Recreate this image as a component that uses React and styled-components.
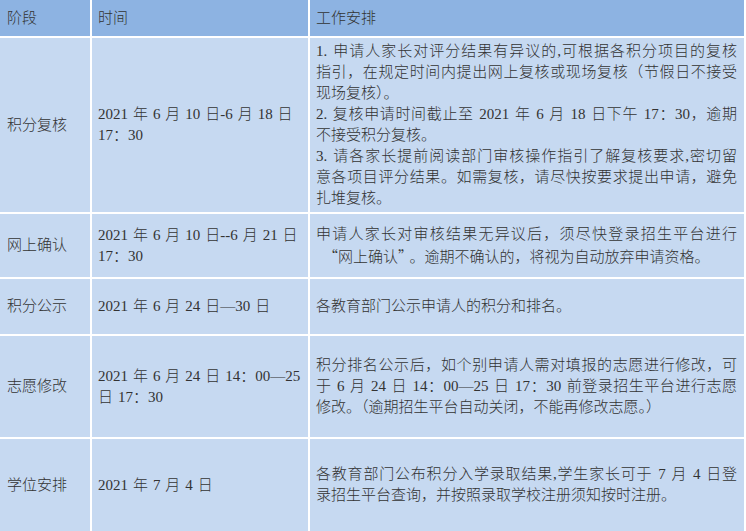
import React from "react";
import styled, { createGlobalStyle } from "styled-components";

const GlobalStyle = createGlobalStyle`
  html, body { margin: 0; padding: 0; background: #ffffff; }
  body {
    font-family: "Liberation Serif", "Noto Sans CJK SC", serif;
    color: #333333;
  }
`;

const Table = styled.div`
  display: grid;
  width: 744px;
  grid-template-columns: 90px 216px 434px;
  grid-template-rows: 36px 174px 63px 55px 101px 92px;
  gap: 2px;
  background: #ffffff;
  font-size: 15px;
  line-height: 21px;
  word-spacing: 1.2px;
  font-weight: 300;
`;

const HeadCell = styled.div`
  background: #8db3e2;
  display: flex;
  align-items: center;
  padding: 0 7px 0 ${(p) => p.$left || 7}px;
  color: #333333;
`;

const Cell = styled.div`
  background: #c6d9f1;
  display: flex;
  align-items: center;
  padding: 0 7px 0 ${(p) => p.$left || 7}px;
  min-width: 0;
`;

const Lines = styled.div`
  width: 100%;
`;

const Line = styled.span`
  display: block;
  text-align: ${(p) => (p.$justify ? "justify" : "left")};
  text-align-last: ${(p) => (p.$justify ? "justify" : "left")};
`;

const TimeLine = styled.span`
  display: block;
  white-space: nowrap;
`;

const Quote = styled.span`
  font-family: "Noto Sans CJK SC", sans-serif;
  margin-left: ${(p) => (p.$open ? "7px" : "0")};
  margin-right: ${(p) => (p.$open ? "0" : "4px")};
`;

const rows = [
  {
    stage: "积分复核",
    time: ["2021 年 6 月 10 日-6 月 18 日", "17：30"],
    work: [
      ["1. 申请人家长对评分结果有异议的,可根据各积分项目的复核", true],
      ["指引，在规定时间内提出网上复核或现场复核（节假日不接受", true],
      ["现场复核）。", false],
      ["2. 复核申请时间截止至 2021 年 6 月 18 日下午 17：30，逾期", true],
      ["不接受积分复核。", false],
      ["3. 请各家长提前阅读部门审核操作指引了解复核要求,密切留", true],
      ["意各项目评分结果。如需复核，请尽快按要求提出申请，避免", true],
      ["扎堆复核。", false],
    ],
  },
  {
    stage: "网上确认",
    time: ["2021 年 6 月 10 日--6 月 21 日", "17：30"],
    work: [
      ["申请人家长对审核结果无异议后，须尽快登录招生平台进行", true],
      [
        <>
          <Quote $open>“</Quote>网上确认<Quote>”</Quote>。逾期不确认的，将视为自动放弃申请资格。
        </>,
        false,
      ],
    ],
  },
  {
    stage: "积分公示",
    time: ["2021 年 6 月 24 日—30 日"],
    work: [["各教育部门公示申请人的积分和排名。", false]],
  },
  {
    stage: "志愿修改",
    time: ["2021 年 6 月 24 日 14：00—25", "日 17：30"],
    work: [
      ["积分排名公示后，如个别申请人需对填报的志愿进行修改，可", true],
      ["于 6 月 24 日 14：00—25 日 17：30 前登录招生平台进行志愿", true],
      ["修改。（逾期招生平台自动关闭，不能再修改志愿。）", false],
    ],
  },
  {
    stage: "学位安排",
    time: ["2021 年 7 月 4 日"],
    work: [
      ["各教育部门公布积分入学录取结果,学生家长可于 7 月 4 日登", true],
      ["录招生平台查询，并按照录取学校注册须知按时注册。", false],
    ],
  },
];

export default function App() {
  return (
    <>
      <GlobalStyle />
      <Table>
        <HeadCell>阶段</HeadCell>
        <HeadCell $left={6}>时间</HeadCell>
        <HeadCell $left={6}>工作安排</HeadCell>
        {rows.map((r) => (
          <React.Fragment key={r.stage}>
            <Cell>{r.stage}</Cell>
            <Cell $left={6}>
              <Lines>
                {r.time.map((t, i) => (
                  <TimeLine key={i}>{t}</TimeLine>
                ))}
              </Lines>
            </Cell>
            <Cell $left={6}>
              <Lines>
                {r.work.map(([t, j], i) => (
                  <Line key={i} $justify={j}>
                    {t}
                  </Line>
                ))}
              </Lines>
            </Cell>
          </React.Fragment>
        ))}
      </Table>
    </>
  );
}
